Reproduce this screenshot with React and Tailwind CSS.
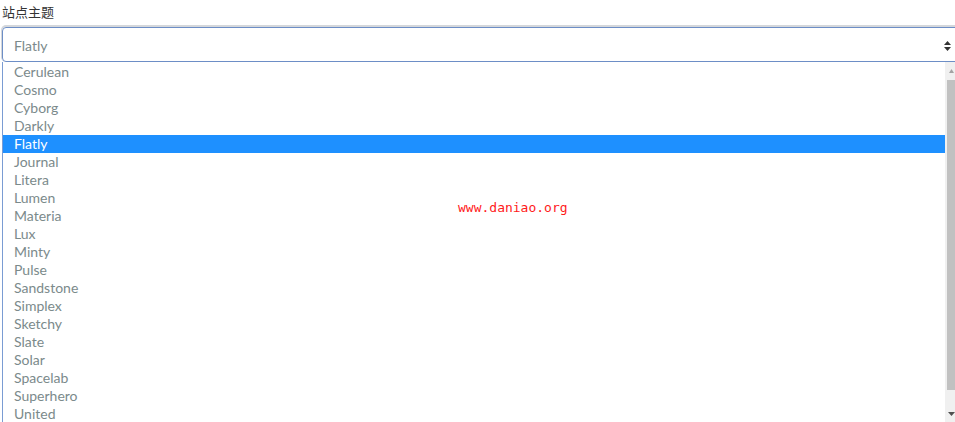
import React from 'react'

const themes = [
  'Cerulean', 'Cosmo', 'Cyborg', 'Darkly', 'Flatly', 'Journal', 'Litera', 'Lumen',
  'Materia', 'Lux', 'Minty', 'Pulse', 'Sandstone', 'Simplex', 'Sketchy', 'Slate',
  'Solar', 'Spacelab', 'Superhero', 'United',
]

const App = () => {
  const selected = 'Flatly'

  return (
    <div className="relative w-[955px] h-[422px] overflow-hidden bg-white font-['Lato','Liberation_Sans',sans-serif]">
      {/* Label */}
      <div className="pl-[2px] pt-[3px] h-[27px] text-[13px] leading-[18px] text-[#333] font-['Noto_Sans_CJK_SC',sans-serif]">
        站点主题
      </div>

      {/* Select box */}
      <div className="ml-[2px] w-[970px] h-[35px] rounded-[4px] border border-[#6d8ec6] shadow-[0_-1px_0_1px_#d4d7db] flex items-center pl-[11px] pt-[2px] text-[14px] text-[#7b8a8b]">
        <span className="flex-1">{selected}</span>
        <svg className="absolute left-[944px] top-[41px]" width="7" height="10" viewBox="0 0 7 10">
          <path d="M3.5 0 L7 4 L0 4 Z" fill="#333" />
          <path d="M0 6 L7 6 L3.5 10 Z" fill="#333" />
        </svg>
      </div>

      {/* Dropdown list */}
      <div className="ml-[2px] flex h-[360px] border-l border-[#7a9cd3]">
        <ul className="flex-1 pt-[1px]">
          {themes.map((t) => (
            <li
              key={t}
              className={
                t === selected
                  ? 'h-[18px] leading-[18px] pl-[11px] text-[14px] bg-[#1e90ff] text-white'
                  : 'h-[18px] leading-[18px] pl-[11px] text-[14px] text-[#7b8a8b]'
              }
            >
              {t}
            </li>
          ))}
        </ul>
        {/* Scrollbar */}
        <div className="w-[10px] bg-[#f0f0f0] flex flex-col">
          <div className="h-[18px] flex items-center justify-end pr-[1px]">
            <svg width="5" height="4" viewBox="0 0 5 4">
              <path d="M2.5 0 L5 4 L0 4 Z" fill="#a3a3a3" />
            </svg>
          </div>
          <div className="ml-[2px] h-[310px] bg-[#c1c1c1]" />
          <div className="flex-1 flex items-end justify-end pb-[6px]">
            <svg width="7" height="4" viewBox="0 0 7 4">
              <path d="M0 0 L7 0 L3.5 4 Z" fill="#505050" />
            </svg>
          </div>
        </div>
      </div>

      {/* Watermark */}
      <div className="absolute left-[458px] top-[199px] text-[13px] leading-[18px] text-[#ff1a1a] font-['DejaVu_Sans_Mono',monospace]">
        www.daniao.org
      </div>
    </div>
  )
}

export default App
